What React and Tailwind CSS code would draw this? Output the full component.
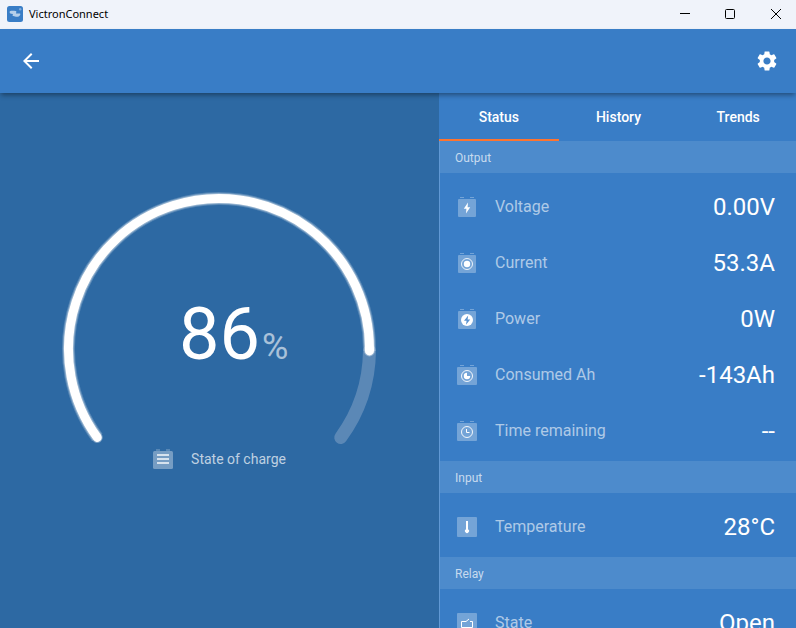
import React, { useState } from "react";
import { MdArrowBack, MdSettings } from "react-icons/md";

const tabs = ["Status", "History", "Trends"];

const sections = [
  {
    title: "Output",
    rows: [
      { icon: "voltage", label: "Voltage", value: "0.00V" },
      { icon: "current", label: "Current", value: "53.3A" },
      { icon: "power", label: "Power", value: "0W" },
      { icon: "consumed", label: "Consumed Ah", value: "-143Ah" },
      { icon: "time", label: "Time remaining", value: "--" },
    ],
  },
  {
    title: "Input",
    rows: [{ icon: "temperature", label: "Temperature", value: "28°C" }],
  },
  {
    title: "Relay",
    rows: [{ icon: "relay", label: "State", value: "Open" }],
  },
];

function Battery({ wide, children }) {
  return (
    <>
      <path d="M3 0h4v1H3zM13 0h4v1h-4z" fill="#fff" fillOpacity="0.3" />
      <rect
        x={wide ? 0 : 1}
        y="2"
        width={wide ? 20 : 18}
        height="18"
        rx="1"
        fill="#fff"
        fillOpacity="0.3"
      />
      {children}
    </>
  );
}

const glyphs = {
  voltage: (
    <Battery>
      <path d="M11 5.5 6.8 11.8h2.6L9 16.5l4.2-6.3h-2.6z" fill="#fff" />
    </Battery>
  ),
  current: (
    <Battery>
      <circle cx="10" cy="11" r="5.5" fill="none" stroke="#fff" strokeOpacity="0.85" />
      <circle cx="10" cy="11" r="3.2" fill="#fff" />
    </Battery>
  ),
  power: (
    <Battery>
      <circle cx="10" cy="11" r="6" fill="#fff" />
      <path d="M11.2 6.4 7 11.8h2.6L9 15.8l4.2-5.4h-2.6z" fill="#5b93d0" />
    </Battery>
  ),
  consumed: (
    <Battery wide>
      <circle cx="10" cy="11" r="5.5" fill="none" stroke="#fff" strokeOpacity="0.9" />
      <path d="M10 7.8V11h3.2A3.2 3.2 0 1 1 10 7.8z" fill="#fff" />
    </Battery>
  ),
  time: (
    <Battery wide>
      <circle cx="10" cy="11" r="5.5" fill="none" stroke="#fff" strokeOpacity="0.9" />
      <path d="M9.5 8v3.5h3" fill="none" stroke="#fff" />
    </Battery>
  ),
  temperature: (
    <>
      <rect width="20" height="20" rx="1" fill="#fff" fillOpacity="0.3" />
      <path d="M9 4h2v8.2a2 2 0 1 1-2 0z" fill="#fff" />
    </>
  ),
  relay: (
    <>
      <rect width="20" height="20" rx="1" fill="#fff" fillOpacity="0.3" />
      <path d="M9 8.5H4.5v6h11v-6H13M9 8.5l3-2.5" fill="none" stroke="#fff" />
    </>
  ),
};

function TitleBar() {
  return (
    <div className="flex h-[29px] shrink-0 items-center bg-[#f0f3fa] pb-0.5 pl-[7px] text-black">
      <svg className="h-4 w-4" viewBox="0 0 16 16">
        <rect width="16" height="16" rx="2.5" fill="#397dc6" />
        <path
          d="M2.8 5.2c1.5-.6 3.8-.3 5.7-.3.7 0 1 .5.8 1.2L9 7.6h3.6c.6 0 .9.3.7.9-.6 1.9-2.3 2.6-4.3 2.2l-2.8-.6c-.6-.1-.8-.5-.6-1L6 7.9 4.200 7.7C3 7.5 2.3 6.5 2.8 5.2z"
          fill="#b5cfea"
        />
        <circle cx="13.2" cy="3.2" r="1.2" fill="#7fabdc" />
      </svg>
      <span className="ml-1.5 font-['Noto_Sans',sans-serif] text-[11px] leading-4">
        VictronConnect
      </span>
      <div className="ml-auto flex gap-1.5">
        <button aria-label="Minimize" className="flex h-[26px] w-10 items-center justify-center">
          <svg className="h-3 w-3" viewBox="0 0 12 12" fill="none" stroke="#000">
            <path d="M2 5.5h10" />
          </svg>
        </button>
        <button aria-label="Maximize" className="flex h-[26px] w-10 items-center justify-center">
          <svg className="h-3 w-3" viewBox="0 0 12 12" fill="none" stroke="#000">
            <rect x="1.5" y="1.5" width="9" height="9" rx="1" />
          </svg>
        </button>
        <button aria-label="Close" className="flex h-[26px] w-10 items-center justify-center">
          <svg className="h-3 w-3" viewBox="0 0 12 12" fill="none" stroke="#000">
            <path d="M1 1l10 10M11 1L1 11" />
          </svg>
        </button>
      </div>
    </div>
  );
}

// the dial is a 252 degree arc, open at the bottom
const SWEEP = 252;
const START = 144;

function point(angle) {
  const rad = (angle * Math.PI) / 180;
  return `${159 + 150.5 * Math.cos(rad)} ${161 + 150.5 * Math.sin(rad)}`;
}

function arc(from, to) {
  return `M${point(from)}A150.5 150.5 0 ${to - from > 180 ? 1 : 0} 1 ${point(to)}`;
}

function Gauge({ percent }) {
  const end = START + (SWEEP * percent) / 100;

  return (
    <div className="grid w-80">
      <svg
        className="col-start-1 row-start-1 w-full"
        viewBox="0 0 320 260"
        fill="none"
        strokeLinecap="round"
      >
        <path d={arc(end, START + SWEEP)} stroke="#5b88b6" strokeWidth="13" />
        <path d={arc(START, end)} stroke="#fff" strokeOpacity="0.2" strokeWidth="13" strokeLinecap="butt" />
        <path d={arc(START, end)} stroke="#fff" strokeOpacity="0.35" strokeWidth="11" />
        <path d={arc(START, end)} stroke="#fff" strokeWidth="9" />
      </svg>
      <div className="col-start-1 row-start-1 grid grid-cols-[1fr_auto_1fr] items-baseline pt-[105px]">
        <span className="col-start-2 text-[72px] leading-[84px] text-white">{percent}</span>
        <span className="pl-0.5 text-[36px] leading-[42px] text-white/60">%</span>
      </div>
    </div>
  );
}

export default function App() {
  const [active, setActive] = useState("Status");

  return (
    <div className="flex h-screen flex-col overflow-hidden bg-[#397dc6] font-[Roboto,sans-serif]">
      <TitleBar />

      <header className="z-10 flex h-16 shrink-0 items-center justify-between bg-[#397dc6] px-[17px] text-white shadow-[0_3px_5px_-1px_rgba(0,0,0,0.4)]">
        <button aria-label="Back" className="px-0.5">
          <MdArrowBack size={24} />
        </button>
        <button aria-label="Settings">
          <MdSettings size={24} />
        </button>
      </header>

      <main className="grid min-h-0 flex-1 grid-cols-[439fr_357fr]">
        <section className="flex flex-col items-center bg-[#2d69a3] pt-[95px]">
          <Gauge percent={86} />
          <div className="flex items-center gap-[18px]">
            <svg className="h-[22px] w-5" viewBox="0 0 20 22" fill="#fff">
              <path d="M3 1h4v2H3zM13 1h4v2h-4z" fillOpacity="0.2" />
              <rect y="3" width="20" height="18" rx="1.5" fillOpacity="0.35" />
              <path d="M4 6h12v2H4zM4 10h12v2H4zM4 14h12v2H4z" fillOpacity="0.7" />
            </svg>
            <span className="text-[14px] leading-5 text-white/70">State of charge</span>
          </div>
        </section>

        <section className="flex min-h-0 flex-col">
          <nav className="-mr-0.5 grid h-12 shrink-0 grid-cols-3">
            {tabs.map((tab) => (
              <button
                key={tab}
                onClick={() => setActive(tab)}
                className={`border-b-2 pt-0.5 text-[14px] leading-5 font-medium text-white ${
                  active === tab ? "border-[#ff7430]" : "border-transparent"
                }`}
              >
                {tab}
              </button>
            ))}
          </nav>

          <div className="min-h-0 flex-1 overflow-hidden border-l border-[#6199d4]">
            {sections.map((section) => (
              <div key={section.title}>
                <h2 className="flex h-8 items-center bg-[#4d8bcc] px-[15px] pt-0.5 text-[12px] leading-4 text-white/70">
                  {section.title}
                </h2>
                <dl className="pt-1.5 pb-0.5">
                  {section.rows.map((row) => (
                    <div key={row.label} className="flex h-14 items-center pr-[21px] pl-[17px]">
                      <svg className="h-5 w-5 shrink-0" viewBox="0 0 20 20">
                        {glyphs[row.icon]}
                      </svg>
                      <dt className="ml-[18px] text-[16px] leading-6 text-white/60">{row.label}</dt>
                      <dd className="ml-auto text-[24px] leading-8 text-white">{row.value}</dd>
                    </div>
                  ))}
                </dl>
              </div>
            ))}
          </div>
        </section>
      </main>
    </div>
  );
}
